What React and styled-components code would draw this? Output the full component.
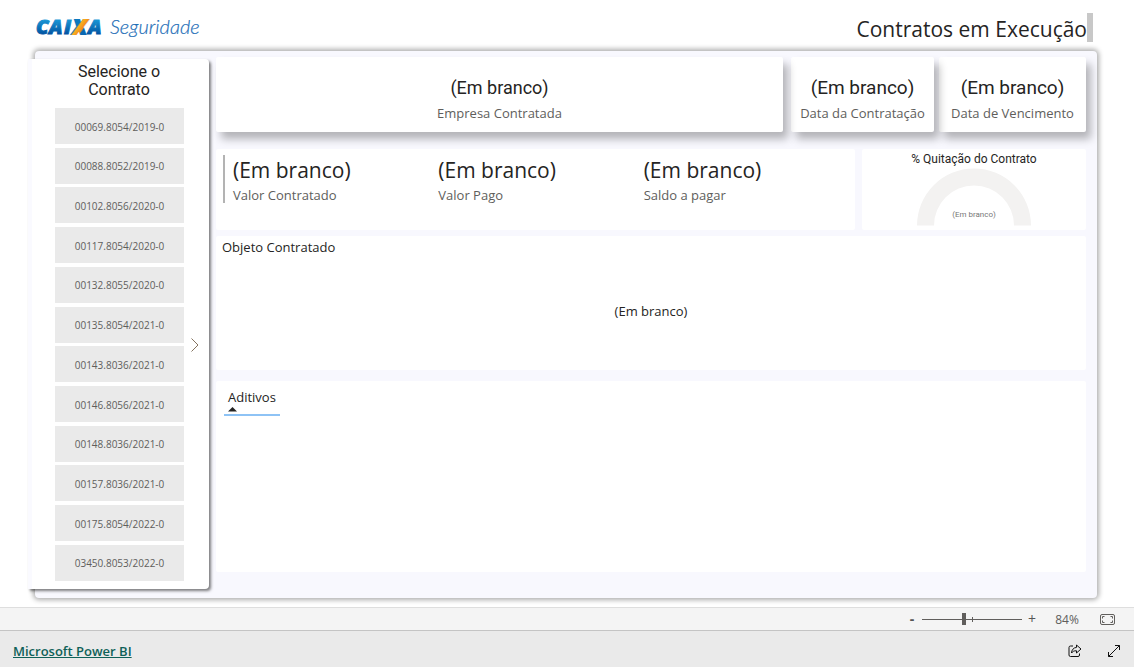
import React, { useState } from 'react';
import styled, { createGlobalStyle } from 'styled-components';

const GlobalStyle = createGlobalStyle`
  * {
    box-sizing: border-box;
  }

  body {
    margin: 0;
    background: #fff;
    color: #252423;
    font-family: 'Open Sans', 'Noto Sans', sans-serif;
    font-size: 13px;
  }

  h1, h2, p, ul, dl, dd {
    margin: 0;
    padding: 0;
  }

  button {
    font-family: inherit;
    border: none;
    padding: 0;
    cursor: pointer;
  }
`;

const PageWrapper = styled.div`
  display: flex;
  flex-direction: column;
  min-height: 100vh;
`;

const Report = styled.main`
  display: flex;
  flex-direction: column;
  flex: 1;
  padding: 0 37px 9px 35px;
`;

const Header = styled.header`
  display: flex;
  justify-content: space-between;
  height: 51px;
  padding: 13px 4px 0 0;
`;

const Logo = styled.svg`
  width: 170px;
  height: 30px;
`;

const ReportTitle = styled.h1`
  height: 29px;
  border-right: 6px solid #c8c8c8;
  font-size: 21px;
  font-weight: 400;
  line-height: 32px;
`;

const Board = styled.div`
  display: flex;
  flex: 1;
  gap: 7px;
  padding: 6px 11px 0 0;
  background: #f8f8fe;
  border-radius: 4px;
  box-shadow: 0 0 5px 2px rgba(0, 0, 0, 0.32);
`;

const Sidebar = styled.aside`
  align-self: flex-start;
  width: 181px;
  margin: 2px 0 9px -7px;
  padding: 4px 0 8px;
  background: #fff;
  border-left: 4px solid #fafaff;
  border-radius: 0 4px 4px 0;
  box-shadow: 2px 2px 3px rgba(0, 0, 0, 0.5);
`;

const SidebarTitle = styled.h2`
  padding: 0 45px 0 42px;
  font-family: Roboto, sans-serif;
  font-size: 16px;
  font-weight: 400;
  line-height: 18px;
  text-align: center;
`;

const SlicerBody = styled.div`
  display: flex;
  align-items: center;
  gap: 6px;
  padding: 9px 0 0 23px;
`;

const ContractList = styled.ul`
  display: flex;
  flex-direction: column;
  justify-content: space-between;
  width: 129px;
  height: 473px;
  list-style: none;
`;

const ContractButton = styled.button`
  display: block;
  width: 100%;
  height: 36px;
  padding-top: 1px;
  background: ${props => props.$active ? '#d4d4d4' : '#eaeaea'};
  color: #605e5c;
  font-size: 10px;
`;

const NextButton = styled.button`
  display: flex;
  background: none;
`;

const Content = styled.div`
  display: flex;
  flex-direction: column;
  flex: 1;
  min-width: 0;
`;

const CardRow = styled.div`
  display: grid;
  grid-template-columns: minmax(0, 1fr) 143px 147px;
  column-gap: 5px;
  margin-bottom: 17px;
`;

const InfoCard = styled.section`
  position: relative;
  z-index: ${props => props.$layer};
  display: flex;
  flex-direction: column;
  gap: 3px;
  height: 75px;
  margin-right: ${props => props.$wide ? '3px' : '0'};
  padding-top: 19px;
  background: #fff;
  border-radius: 2px;
  box-shadow: 5px 7px 8px rgba(0, 0, 0, 0.28);
  text-align: center;
`;

const CardValue = styled.p`
  font-family: Roboto, sans-serif;
  font-size: ${props => props.$wide ? '18px' : '19px'};
  font-weight: 400;
  line-height: 24px;
`;

const CardLabel = styled.p`
  color: #605e5c;
  line-height: 20px;
`;

const SummaryRow = styled.div`
  display: grid;
  grid-template-columns: minmax(0, 1fr) 224px;
  gap: 7px;
  height: 81px;
  margin-bottom: 6px;
`;

const Panel = styled.section`
  background: #fff;
  border-radius: 2px;
`;

const ValuesPanel = styled(Panel)`
  padding: 6px 14px 0 7px;
`;

const ValueList = styled.dl`
  display: grid;
  grid-template-columns: repeat(3, 1fr);
  height: 48px;
  border-left: 2px solid #b3b3b3;
`;

const ValueItem = styled.div`
  display: flex;
  flex-direction: column-reverse;
  justify-content: flex-end;
  padding-left: 8px;
`;

const ValueAmount = styled.dd`
  font-size: 21px;
  line-height: 30px;
`;

const ValueLabel = styled.dt`
  color: #605e5c;
  line-height: 20px;
`;

const GaugePanel = styled(Panel)`
  display: flex;
  flex-direction: column;
  align-items: center;
  padding-top: 2px;
`;

const GaugeTitle = styled.h2`
  font-family: Roboto, sans-serif;
  font-size: 12px;
  font-weight: 400;
  line-height: 16px;
`;

const Gauge = styled.svg`
  width: 114px;
  height: 59px;
`;

const GaugeText = styled.text`
  fill: #777;
  font-family: Roboto, sans-serif;
  font-size: 8px;
  text-anchor: middle;
`;

const ObjectPanel = styled(Panel)`
  height: 134px;
  margin-bottom: 11px;
  padding: 2px 6px;
`;

const PanelTitle = styled.h2`
  font-size: 13px;
  font-weight: 400;
  line-height: 18px;
`;

const ObjectText = styled.p`
  padding-top: 46px;
  line-height: 18px;
  text-align: center;
`;

const TablePanel = styled(Panel)`
  height: 191px;
  padding: 7px 8px;
`;

const AddendumTable = styled.table`
  border-collapse: collapse;
`;

const AddendumHead = styled.th`
  padding: 0 4px 2px;
  border-bottom: 2px solid #8ec3f5;
  font-weight: 400;
  line-height: 19px;
  text-align: left;
`;

const SortIcon = styled.svg`
  display: block;
  width: 9px;
  height: 5px;
`;

const ZoomBar = styled.div`
  display: flex;
  align-items: center;
  justify-content: flex-end;
  height: 24px;
  padding-right: 19px;
  background: #f4f4f4;
  border-top: 1px solid #dedede;
  border-bottom: 1px solid #c4c4c4;
  color: #605e5c;
`;

const ZoomStep = styled.button`
  width: 20px;
  background: none;
  color: #555;
  font-size: 14px;
  font-weight: ${props => props.$strong ? 700 : 400};
  line-height: 20px;
  text-align: center;
`;

const ZoomRange = styled.input`
  appearance: none;
  width: 100px;
  height: 12px;
  margin: 0;
  background:
    linear-gradient(#605e5c, #605e5c) center / 100% 1px no-repeat,
    linear-gradient(#605e5c, #605e5c) center / 1px 5px no-repeat;

  &::-webkit-slider-thumb {
    appearance: none;
    width: 4px;
    height: 12px;
    background: #605e5c;
  }
`;

const ZoomValue = styled.output`
  width: 50px;
  margin-right: 8px;
  font-size: 12px;
  text-align: center;
`;

const IconButton = styled.button`
  display: flex;
  background: none;
`;

const Footer = styled.footer`
  display: flex;
  align-items: center;
  gap: 25px;
  height: 36px;
  padding: 4px 13px 0;
  background: #eaeaea;
`;

const FooterLink = styled.a`
  margin-right: auto;
  color: #0f6158;
  font-size: 13px;
  font-weight: 600;
`;

const contracts = [
  '00069.8054/2019-0',
  '00088.8052/2019-0',
  '00102.8056/2020-0',
  '00117.8054/2020-0',
  '00132.8055/2020-0',
  '00135.8054/2021-0',
  '00143.8036/2021-0',
  '00146.8056/2021-0',
  '00148.8036/2021-0',
  '00157.8036/2021-0',
  '00175.8054/2022-0',
  '03450.8053/2022-0',
];

const cards = [
  { label: 'Empresa Contratada', wide: true },
  { label: 'Data da Contratação' },
  { label: 'Data de Vencimento' },
];

const values = ['Valor Contratado', 'Valor Pago', 'Saldo a pagar'];

const EMPTY = '(Em branco)';

const CaixaLogo = () => (
  <Logo viewBox="0 0 170 30" role="img" aria-label="CAIXA Seguridade">
    <defs>
      <linearGradient id="blue" gradientUnits="userSpaceOnUse" x1="0" y1="6" x2="0" y2="22">
        <stop offset="0" stopColor="#1a9ad8" />
        <stop offset="1" stopColor="#004f9e" />
      </linearGradient>
      <linearGradient id="cross" gradientUnits="userSpaceOnUse" x1="38" y1="9" x2="53" y2="20">
        <stop offset="0.3" stopColor="#0a78be" />
        <stop offset="0.38" stopColor="#f9b01c" />
        <stop offset="0.62" stopColor="#f28c1e" />
        <stop offset="0.7" stopColor="#0a68b2" />
      </linearGradient>
    </defs>
    <g fontFamily="Open Sans" fontSize="20" fontWeight="800" fontStyle="italic" strokeWidth="1">
      <text x="1 14 29" y="21" fill="url(#blue)" stroke="url(#blue)">CAI</text>
      <text x="38" y="21" fill="url(#cross)" stroke="url(#cross)" strokeWidth="2">X</text>
      <text x="53" y="21" fill="url(#blue)" stroke="url(#blue)">A</text>
    </g>
    <text x="75" y="21" fill="#1f6fb8" stroke="#1f6fb8" strokeWidth="0.2" fontFamily="Lato" fontSize="20" fontWeight="300" fontStyle="italic">
      Seguridade
    </text>
  </Logo>
);

const App = () => {
  const [selected, setSelected] = useState(null);
  const [zoom, setZoom] = useState(84);

  const changeZoom = (step) => {
    setZoom(Math.min(200, Math.max(0, zoom + step)));
  };

  return (
    <PageWrapper>
      <GlobalStyle />
      <Report>
        <Header>
          <CaixaLogo />
          <ReportTitle>Contratos em Execução</ReportTitle>
        </Header>
        <Board>
          <Sidebar>
            <SidebarTitle>Selecione o Contrato</SidebarTitle>
            <SlicerBody>
              <ContractList>
                {contracts.map(contract => (
                  <li key={contract}>
                    <ContractButton
                      type="button"
                      $active={selected === contract}
                      onClick={() => setSelected(contract)}
                    >
                      {contract}
                    </ContractButton>
                  </li>
                ))}
              </ContractList>
              <NextButton type="button" aria-label="Próximo">
                <svg width="9" height="14" viewBox="0 0 9 14" fill="none" stroke="#85735f">
                  <path d="M1.500 .5l6.500 6.500-6.500 6.500" />
                </svg>
              </NextButton>
            </SlicerBody>
          </Sidebar>
          <Content>
            <CardRow>
              {cards.map((card, index) => (
                <InfoCard key={card.label} $wide={card.wide} $layer={cards.length - index}>
                  <CardValue $wide={card.wide}>{EMPTY}</CardValue>
                  <CardLabel>{card.label}</CardLabel>
                </InfoCard>
              ))}
            </CardRow>
            <SummaryRow>
              <ValuesPanel>
                <ValueList>
                  {values.map(label => (
                    <ValueItem key={label}>
                      <ValueLabel>{label}</ValueLabel>
                      <ValueAmount>{EMPTY}</ValueAmount>
                    </ValueItem>
                  ))}
                </ValueList>
              </ValuesPanel>
              <GaugePanel>
                <GaugeTitle>% Quitação do Contrato</GaugeTitle>
                <Gauge viewBox="0 0 114 59">
                  <path d="M0 58.500a57 57 0 0 1 114 0h-17a40 40 0 0 0-80 0z" fill="#f3f2f1" />
                  <GaugeText x="57" y="50">{EMPTY}</GaugeText>
                </Gauge>
              </GaugePanel>
            </SummaryRow>
            <ObjectPanel>
              <PanelTitle>Objeto Contratado</PanelTitle>
              <ObjectText>{EMPTY}</ObjectText>
            </ObjectPanel>
            <TablePanel>
              <AddendumTable>
                <thead>
                  <tr>
                    <AddendumHead scope="col" aria-sort="ascending">
                      Aditivos
                      <SortIcon viewBox="0 0 9 5">
                        <path d="M4.500 0L9 4.500H0z" fill="#252423" />
                      </SortIcon>
                    </AddendumHead>
                  </tr>
                </thead>
              </AddendumTable>
            </TablePanel>
          </Content>
        </Board>
      </Report>
      <ZoomBar>
        <ZoomStep type="button" $strong aria-label="Reduzir" onClick={() => changeZoom(-10)}>-</ZoomStep>
        <ZoomRange
          type="range"
          min="0"
          max="200"
          value={zoom}
          aria-label="Zoom"
          onChange={(e) => setZoom(Number(e.target.value))}
        />
        <ZoomStep type="button" aria-label="Ampliar" onClick={() => changeZoom(10)}>+</ZoomStep>
        <ZoomValue>{zoom}%</ZoomValue>
        <IconButton type="button" aria-label="Ajustar à página">
          <svg width="15" height="11" viewBox="0 0 15 11" fill="none" stroke="#605e5c">
            <rect x="0.500" y="0.500" width="14" height="10" rx="1.500" />
            <path d="M2.500 4.500v-2h2M10.500 2.500h2v2M12.500 6.500v2h-2M4.500 8.500h-2v-2" />
          </svg>
        </IconButton>
      </ZoomBar>
      <Footer>
        <FooterLink href="#">Microsoft Power BI</FooterLink>
        <IconButton type="button" aria-label="Compartilhar">
          <svg width="14" height="14" viewBox="0 0 14 14" fill="none" stroke="#111" strokeLinejoin="round">
            <path d="M5 2H2.500a1.500 1.500 0 0 0-1.500 1.500v7.500a1.500 1.500 0 0 0 1.500 1.500h7.500a1.500 1.500 0 0 0 1.500-1.500V9.500" />
            <path d="M8.500 1l4.500 4-4.500 4V6.800C6 6.600 4.700 7.500 3.500 9c.2-3 1.800-5.300 5-5.600z" />
          </svg>
        </IconButton>
        <IconButton type="button" aria-label="Tela inteira">
          <svg width="14" height="14" viewBox="0 0 14 14" fill="none" stroke="#111">
            <path d="M1.500 12.500L12.500 1.500M8 1.500h4.500V6M1.500 8v4.500H6" />
          </svg>
        </IconButton>
      </Footer>
    </PageWrapper>
  );
};

export default App;
